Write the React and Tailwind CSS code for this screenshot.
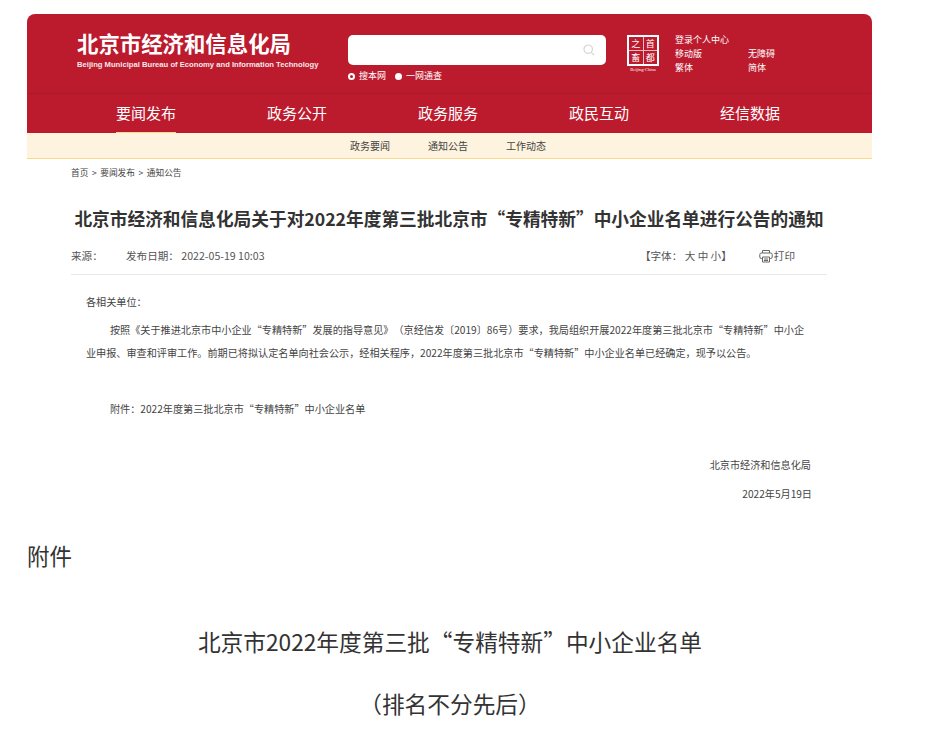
import React from 'react';

const FONT = 'font-["Noto_Sans_CJK_SC","Liberation_Sans",sans-serif]';

const navItems = ['要闻发布', '政务公开', '政务服务', '政民互动', '经信数据'];
const subItems = ['政务要闻', '通知公告', '工作动态'];

function SealLogo() {
    return (
        <div className="w-[34px] flex flex-col items-center">
            <div className="w-[32px] h-[31px] border-2 border-white grid grid-cols-2 grid-rows-2 gap-px bg-white/70 text-white text-[9px] leading-none">
                <span className="bg-[#bc1b2e] flex items-center justify-center">之</span>
                <span className="bg-[#bc1b2e] flex items-center justify-center">首</span>
                <span className="bg-[#bc1b2e] flex items-center justify-center">畜</span>
                <span className="bg-[#bc1b2e] flex items-center justify-center">都</span>
            </div>
            <span className="text-[4.5px] leading-[6px] mt-px text-white font-['Liberation_Serif',serif] whitespace-nowrap">Beijing-China</span>
        </div>
    );
}

function SearchIcon() {
    return (
        <svg width="12" height="12" viewBox="0 0 12 12" fill="none" stroke="#d4d4d4" strokeWidth="1.2">
            <circle cx="5.2" cy="5.2" r="4.2" />
            <path d="M8.3 8.3L11.2 11.2" />
        </svg>
    );
}

function PrintIcon() {
    return (
        <svg width="14" height="14" viewBox="0 0 14 14" fill="none" stroke="#666" strokeWidth="1">
            <path d="M3.5 4V1.5h7V4" />
            <rect x="0.8" y="4" width="12.4" height="5.5" rx="1.5" />
            <path d="M3.5 8h7v5h-7z" fill="#fff" />
            <path d="M5 10h4M5 11.5h4" />
        </svg>
    );
}

export default function App() {
    return (
        <div className={`${FONT} [text-spacing-trim:space-all] w-[946px] h-[751px] overflow-hidden bg-white pt-[14px]`}>
            <div className="ml-[27px] w-[845px]">
                {/* Site header */}
                <header className="bg-[#bc1b2e] rounded-t-lg text-white">
                    <div className="h-[80px] flex border-b border-[#a91a2b]">
                        <div className="w-[321px] pl-[50px] pt-[16px]">
                            <h1 className="text-[21.4px] leading-[26px] font-bold whitespace-nowrap">北京市经济和信息化局</h1>
                            <p className="text-[7.65px] leading-[10px] mt-[4px] font-bold font-['Liberation_Sans',sans-serif] whitespace-nowrap opacity-90">Beijing Municipal Bureau of Economy and Information Technology</p>
                        </div>
                        <div className="w-[258px] pt-[21px]">
                            <div className="h-[30px] bg-white rounded-[5px] flex items-center justify-end pr-[11px]">
                                <SearchIcon />
                            </div>
                            <div className="flex items-center text-[9px] leading-[12px] mt-[5px]">
                                <span className="w-[7px] h-[7px] rounded-full border-2 border-white mr-[4px]"></span>
                                <span className="mr-[9px]">搜本网</span>
                                <span className="w-[7px] h-[7px] rounded-full bg-white mr-[4px]"></span>
                                <span>一网通查</span>
                            </div>
                        </div>
                        <div className="pl-[20px] pt-[21px]">
                            <SealLogo />
                        </div>
                        <div className="pl-[15px] pt-[19px] text-[9px] leading-[14px] w-[160px]">
                            <div>登录个人中心</div>
                            <div className="grid grid-cols-[73px_1fr]">
                                <span>移动版</span>
                                <span>无障碍</span>
                                <span>繁体</span>
                                <span>简体</span>
                            </div>
                        </div>
                    </div>
                    <nav className="h-[39px] pl-[89px] flex text-[15px] leading-[38px]">
                        {navItems.map((item, i) => (
                            <a key={item} className="w-[151px] text-left">
                                <span className={`block w-[60px] h-[39px] whitespace-nowrap ${i === 0 ? 'border-b border-[#fad98c]' : ''}`}>{item}</span>
                            </a>
                        ))}
                    </nav>
                </header>
                <div className="h-[26px] bg-[#fdf3de] border-b border-[#fad98c] flex pl-[323px] gap-[38px] text-[10px] leading-[26px] text-[#444]">
                    {subItems.map(item => <span key={item}>{item}</span>)}
                </div>

                {/* Article */}
                <div className="pl-[44px] pr-[45px]">
                    <div className="mt-[8px] h-[12px] text-[8.7px] leading-[12px] text-[#444] flex gap-[3.5px]">
                        <span>首页</span><span>&gt;</span><span>要闻发布</span><span>&gt;</span><span>通知公告</span>
                    </div>
                    <h2 className="mt-[27px] text-[17.7px] leading-[24px] font-bold text-[#333] text-center whitespace-nowrap">北京市经济和信息化局关于对2022年度第三批北京市“专精特新”中小企业名单进行公告的通知</h2>
                    <div className="mt-[18px] h-[27px] border-b border-[#e8e8e8] flex items-start text-[10.6px] leading-[16px] text-[#555]">
                        <span className="w-[55px]">来源：</span>
                        <span>发布日期： 2022-05-19 10:03</span>
                        <span className="ml-auto">【字体： 大 中 小】</span>
                        <span className="ml-[27px] mr-[32px] flex items-center gap-px"><PrintIcon />打印</span>
                    </div>
                    <div className="px-[15px] text-[10.15px] leading-[23px] text-[#444]">
                        <p className="mt-[15px]">各相关单位：</p>
                        <p className="mt-[5px] indent-[24px]">按照《关于推进北京市中小企业“专精特新”发展的指导意见》（京经信发〔2019〕86号）要求，我局组织开展2022年度第三批北京市“专精特新”中小企业申报、审查和评审工作。前期已将拟认定名单向社会公示，经相关程序，2022年度第三批北京市“专精特新”中小企业名单已经确定，现予以公告。</p>
                        <p className="mt-[33px] indent-[24px]">附件：2022年度第三批北京市“专精特新”中小企业名单</p>
                        <p className="mt-[33px] mr-px text-right">北京市经济和信息化局</p>
                        <p className="mt-[6px] text-right">2022年5月19日</p>
                    </div>
                </div>

                {/* Attachment */}
                <div className="text-[#333]">
                    <p className="mt-[34px] text-[22.5px] leading-[32px]">附件</p>
                    <p className="mt-[55px] w-[846px] text-center text-[22.7px] leading-[32px]">北京市2022年度第三批“专精特新”中小企业名单</p>
                    <p className="mt-[30px] w-[846px] text-center text-[22.7px] leading-[32px]">（排名不分先后）</p>
                </div>
            </div>
        </div>
    );
}
